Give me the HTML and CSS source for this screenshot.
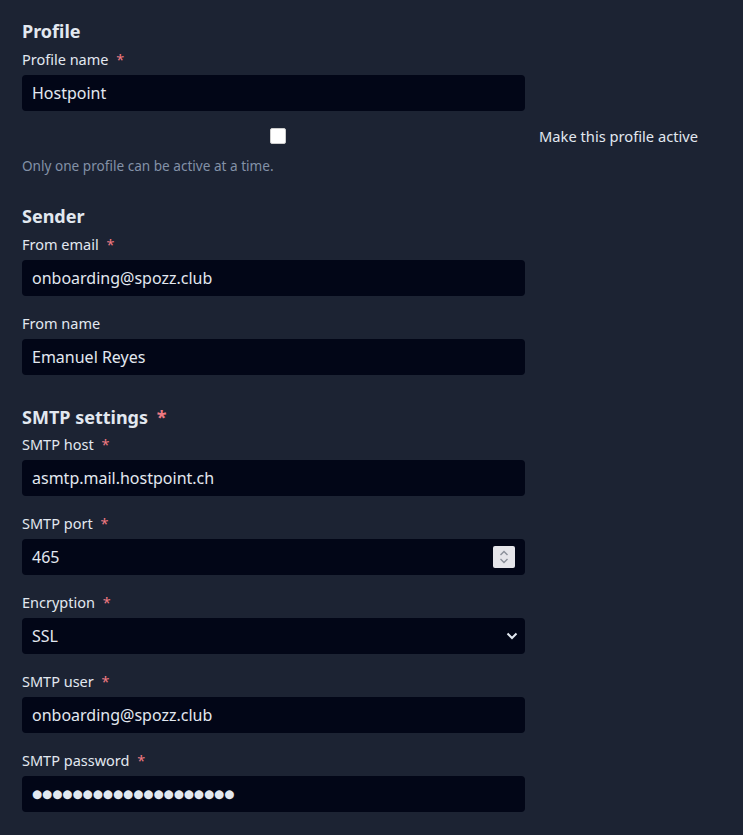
FILE: index.html
```html
<!DOCTYPE html>
<html lang="en">
<head>
<meta charset="utf-8">
<title>SMTP profile</title>
<link rel="stylesheet" href="styles.css">
</head>
<body>
<form class="form">
  <section class="section section-profile">
    <h2 class="heading">Profile</h2>
    <div class="field">
      <label class="label">Profile name <span class="req">*</span></label>
      <div class="input">Hostpoint</div>
    </div>
    <div class="check-row">
      <div class="check-cell"><span class="checkbox"></span></div>
      <span class="check-label">Make this profile active</span>
    </div>
    <p class="help">Only one profile can be active at a time.</p>
  </section>

  <section class="section">
    <h2 class="heading">Sender</h2>
    <div class="field">
      <label class="label">From email <span class="req">*</span></label>
      <div class="input">onboarding@spozz.club</div>
    </div>
    <div class="field">
      <label class="label">From name</label>
      <div class="input">Emanuel Reyes</div>
    </div>
  </section>

  <section class="section">
    <h2 class="heading heading-smtp">SMTP settings <span class="req">*</span></h2>
    <div class="field">
      <label class="label">SMTP host <span class="req">*</span></label>
      <div class="input">asmtp.mail.hostpoint.ch</div>
    </div>
    <div class="field">
      <label class="label">SMTP port <span class="req">*</span></label>
      <div class="input input-num">465
        <span class="spinner">
          <svg width="12" height="16" viewBox="0 0 12 16"><path d="M2.5 6 L6 2.5 L9.5 6 M2.5 10 L6 13.5 L9.5 10" fill="none" stroke="#8a8f99" stroke-width="1.4"/></svg>
        </span>
      </div>
    </div>
    <div class="field">
      <label class="label">Encryption <span class="req">*</span></label>
      <div class="input input-select">SSL
        <svg class="chev" width="12" height="8" viewBox="0 0 12 8"><path d="M1.5 1.5 L6 6 L10.5 1.5" fill="none" stroke="#e2e8f0" stroke-width="2"/></svg>
      </div>
    </div>
    <div class="field">
      <label class="label">SMTP user <span class="req">*</span></label>
      <div class="input">onboarding@spozz.club</div>
    </div>
    <div class="field">
      <label class="label">SMTP password <span class="req">*</span></label>
      <div class="input input-pw">●●●●●●●●●●●●●●●●●●●●</div>
    </div>
  </section>
</form>
</body>
</html>
```
FILE: styles.css
```css
html, body {
  margin: 0;
  padding: 0;
  background: #1c2333;
}
body {
  font-family: "Noto Sans", "Open Sans", sans-serif;
  color: #e2e8f0;
}
.form {
  padding: 19px 0 0 22px;
  width: 503px;
}
.section {
  margin-bottom: 30px;
}
.section-profile {
  margin-bottom: 29px;
}
.heading {
  margin: 0 0 6px;
  font-size: 18px;
  font-weight: 700;
  line-height: 24px;
  color: #e2e8f0;
}
.heading-smtp {
  margin-bottom: 5px;
}
.req {
  color: #f07a82;
  margin-left: 4px;
}
.field {
  margin-bottom: 17px;
}
.label {
  display: block;
  font-size: 14.5px;
  line-height: 20px;
  margin-bottom: 6px;
}
.input {
  position: relative;
  box-sizing: border-box;
  height: 36px;
  background: #020617;
  border-radius: 4px;
  padding: 0 10px;
  font-size: 16px;
  line-height: 36px;
  color: #e2e8f0;
}
.spinner {
  position: absolute;
  right: 10px;
  top: 7px;
  width: 22px;
  height: 22px;
  background: #e5e5ea;
  border-radius: 2px;
  display: flex;
  align-items: center;
  justify-content: center;
}
.chev {
  position: absolute;
  right: 7px;
  top: 14px;
}
.input-pw {
  font-family: "DejaVu Sans", sans-serif;
  font-size: 11.6px;
  letter-spacing: 0;
}
.check-row {
  display: flex;
  align-items: center;
  width: 700px;
}
.check-cell {
  width: 512px;
  display: flex;
  justify-content: center;
}
.checkbox {
  width: 14px;
  height: 14px;
  background: #fff;
  border-radius: 2px;
  border: 1px solid #ccc;
}
.check-label {
  margin-left: 5px;
  font-size: 14.7px;
  line-height: 16px;
}
.help {
  margin: 12px 0 0;
  font-size: 13.6px;
  color: #8391a7;
}
```
